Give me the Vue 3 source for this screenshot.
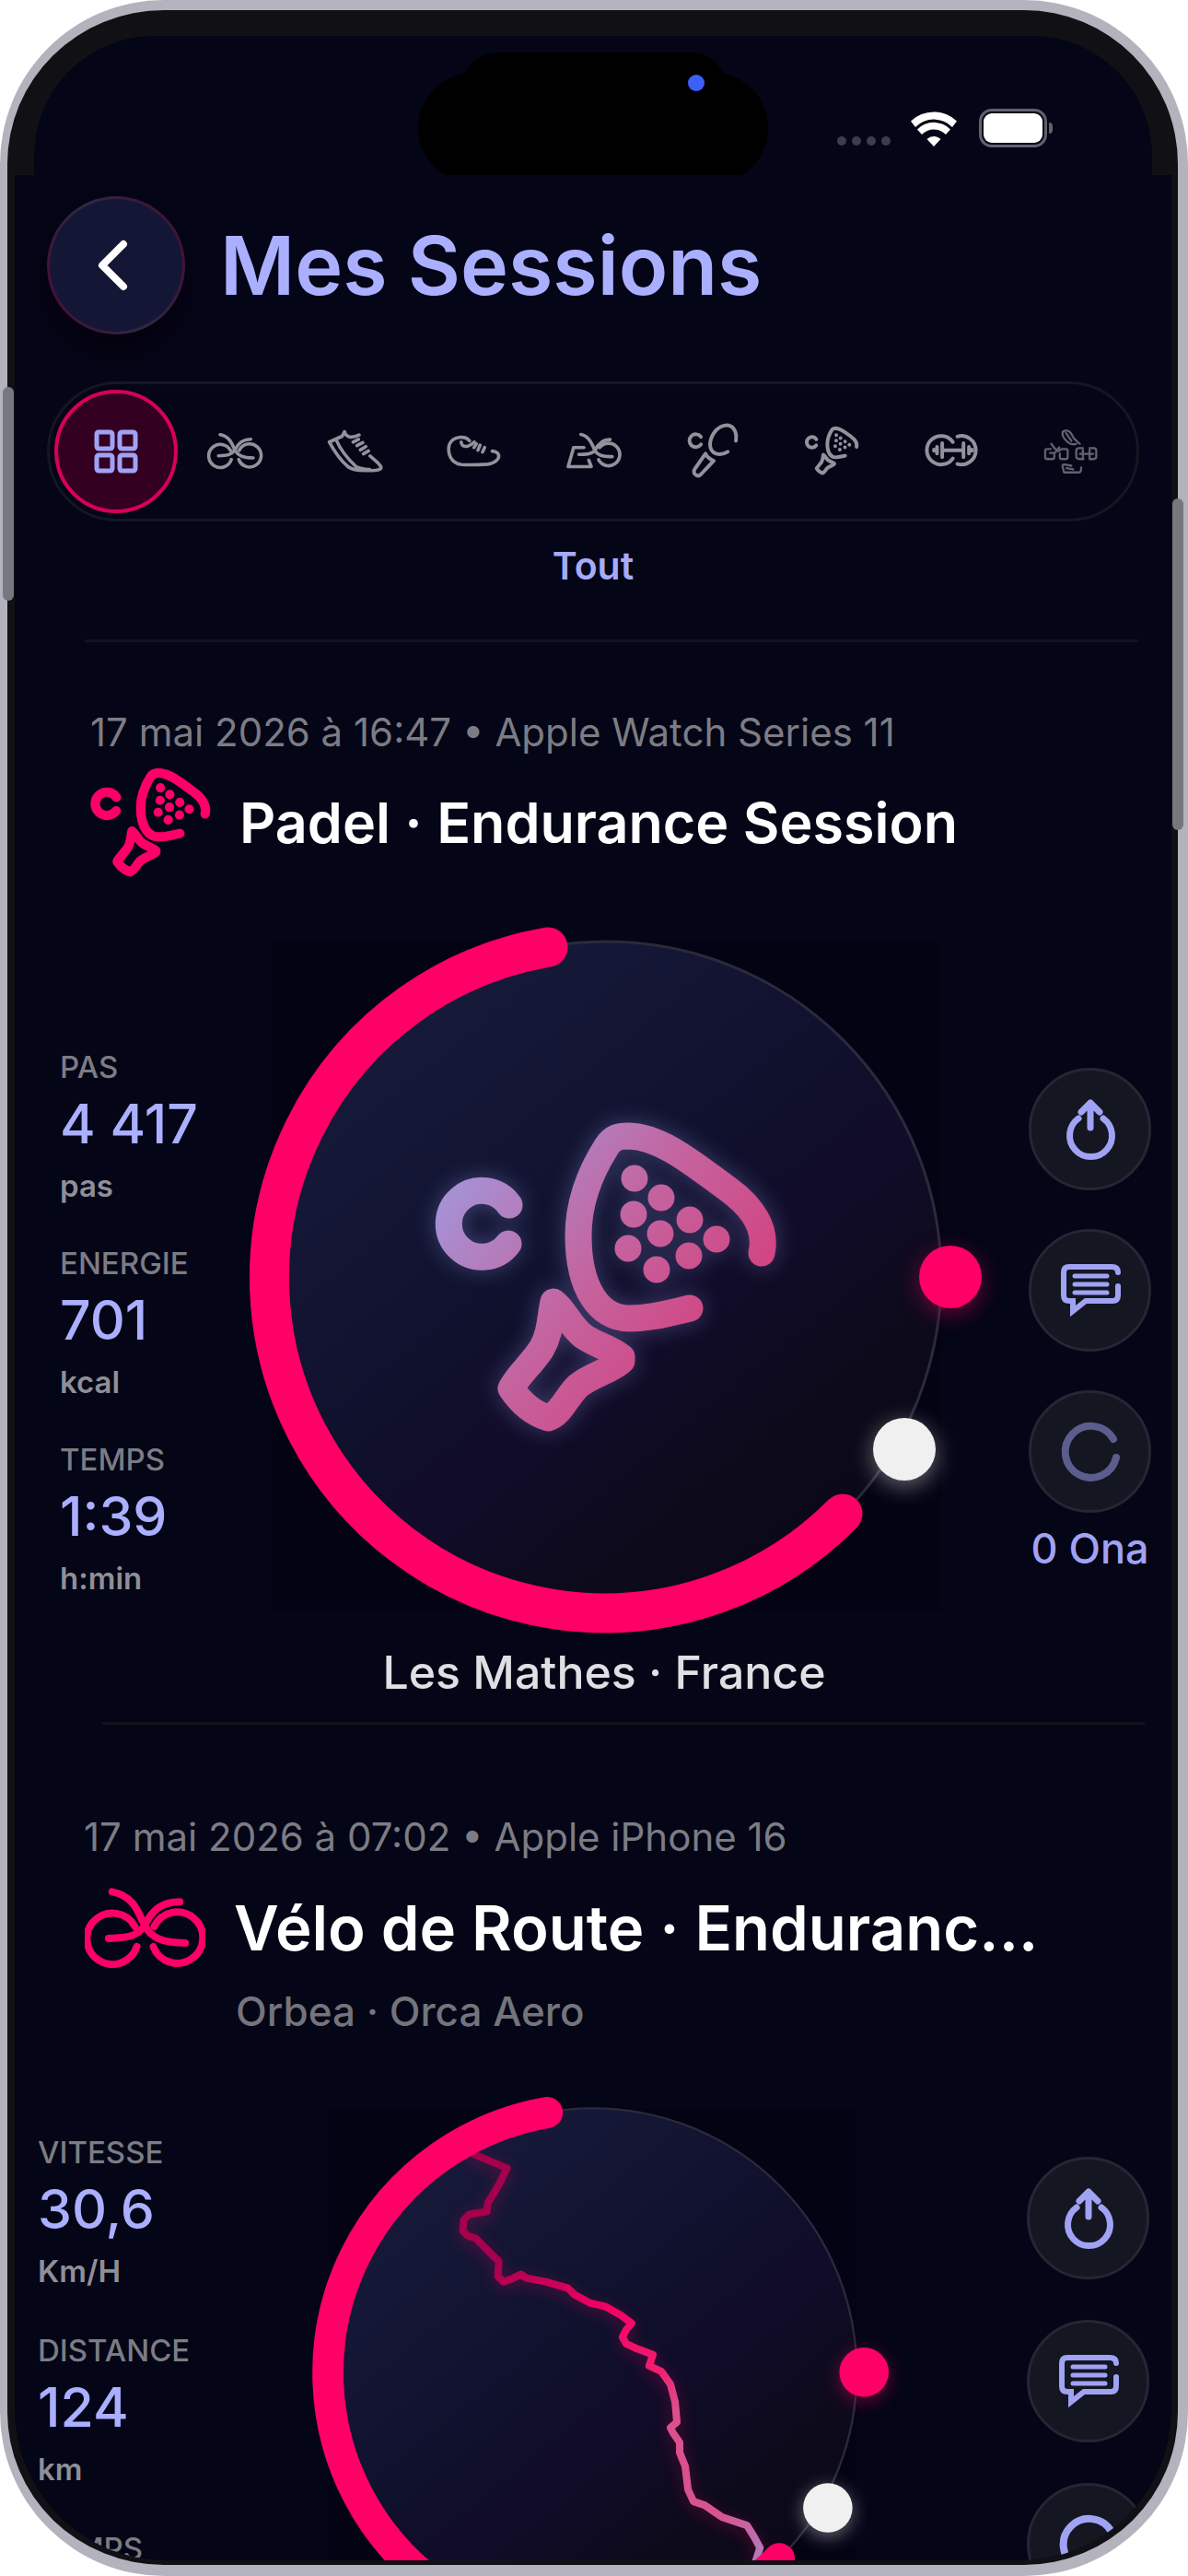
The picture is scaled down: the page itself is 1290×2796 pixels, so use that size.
<script setup>
import { ref } from 'vue'

const padel = [
  'M80 89A36 36 0 1 0 79 131',
  'M276 201C250 207 232 212 210 212C178 212 155 180 155 122C155 84 170 50 186 25C192 16 198 14 210 14C246 15 282 46 318 72C344 91 360 115 354 141',
  'M128 194C124 212 125 228 115 245C104 262 90 273 82 288C92 303 106 315 122 320C136 316 142 297 155 285C168 274 192 268 202 258V254C190 244 172 240 160 231C146 220 140 203 128 194Z',
  'M216 60h0M245 81h0M215 99h0M276 105h0M244 120h0M305 126h0M209 136h0M275 144h0M240 159h0',
]

const bike = [
  'M30 4C52 8 58 24 65 40C72 54 84 60 110 60',
  'M104 15C84 15 74 24 66 40C58 53 48 54 26 55',
  'M57 64A28 28 0 1 1 55 42',
  'M75 64A28 28 0 1 0 76 42',
]

const tabs = [
  {
    label: 'Tout',
    box: '-33 -33 66 66',
    width: 5,
    paths: [
      'M-19-21H-7Q-4-21-4-18V-6Q-4-3-7-3H-18Q-21-3-21-6V-18Q-21-21-19-21Z',
      'M7-21H18Q21-21 21-18V-6Q21-3 18-3H7Q4-3 4-6V-18Q4-21 7-21Z',
      'M-18 4H-7Q-4 4-4 7V18Q-4 21-7 21H-18Q-21 21-21 18V7Q-21 4-18 4Z',
      'M7 4H18Q21 4 21 7V18Q21 21 18 21H7Q4 21 4 18V7Q4 4 7 4Z',
    ],
  },
  { label: 'Vélo', box: '-8 -29 147 147', width: 8, paths: bike },
  {
    label: 'Course',
    box: '425 53 200 200',
    width: 11,
    paths: [
      'M492 88C498 108 515 110 540 99M492 88L484 103L442 122C460 155 480 182 502 202C515 214 535 216 560 216C590 216 618 216 611 202C604 190 590 180 576 168',
      'M464 114C480 150 505 180 530 203C540 208 555 211 575 212',
      'M520 122L538 113M533 134L552 124M544 148L562 137M554 161L571 151',
    ],
  },
  {
    label: 'Marche',
    box: '815 53 200 200',
    width: 11,
    paths: [
      'M902 118C888 100 848 102 836 130C828 160 842 192 876 196C905 198 935 197 962 195C990 191 1003 175 997 162C994 156 987 153 977 152',
      'M875 122C876 140 898 142 918 122',
      'M917 140L925 128M930 149L937 132M945 155L952 140',
    ],
  },
  {
    label: 'Home trainer',
    box: '1202 53 200 200',
    width: 11,
    paths: [
      'M1272 140H1238L1220 203H1296L1288 182',
      'M1262 97C1290 103 1299 130 1308 150C1318 168 1340 171 1365 170',
      'M1358 114C1332 113 1318 130 1308 150C1298 163 1275 163 1255 163',
      'M1320 180A37 37 0 1 0 1324 140',
    ],
  },
  {
    label: 'Tennis',
    box: '59 53 200 200',
    width: 12,
    paths: [
      'M120 105A21 21 0 1 0 120 130',
      'M235 118C240 82 222 66 202 67C172 70 150 102 150 132C152 162 182 170 208 154',
      'M135 160C138 170 150 178 162 184L120 228C108 240 92 226 99 212Z',
    ],
  },
  { label: 'Padel', box: '-23 -35 414 414', width: 25, paths: padel },
  {
    label: 'Musculation',
    box: '833 53 200 200',
    width: 12,
    paths: [
      'M938 122A47 47 0 1 0 938 176M953 104A47 47 0 1 1 953 194',
      'M905 149H970M903 126V172M973 126V172M886 138V160M991 138V160M876 147V151M1001 147V151',
    ],
  },
  {
    label: 'Autres',
    box: '1220 53 200 200',
    width: 7,
    dim: true,
    paths: [
      'M1296 88C1304 82 1316 84 1322 92L1334 112L1352 128M1296 88C1292 98 1300 112 1312 122C1322 130 1334 130 1340 128M1306 92L1324 118',
      'M1256 145H1244Q1238 145 1238 151V172Q1238 178 1244 178H1262Q1268 178 1268 172V164M1286 150Q1288 145 1294 145H1306Q1312 145 1312 151V172Q1312 178 1306 178H1292Q1286 178 1286 172V160M1258 128L1270 144L1282 152M1284 140L1270 158H1254',
      'M1362 142H1350Q1340 142 1340 152V170Q1340 178 1350 178H1364M1384 142H1398Q1406 142 1406 152V170Q1406 178 1398 178H1384M1352 161H1396M1362 148V176M1384 148V176',
      'M1324 200L1300 196Q1294 196 1295 202L1300 222H1348Q1358 222 1356 206M1308 208L1330 212',
    ],
  },
]

const activeTab = ref('Tout')

const sessions = [
  {
    id: 1,
    kind: 'emblem',
    date: '17 mai 2026 à 16:47 • Apple Watch Series 11',
    title: 'Padel · Endurance Session',
    icon: { box: '0 0 371 336', width: 29, paths: padel },
    stats: [
      { label: 'PAS', value: '4 417', unit: 'pas' },
      { label: 'ENERGIE', value: '701', unit: 'kcal' },
      { label: 'TEMPS', value: '1:39', unit: 'h:min' },
    ],
    place: 'Les Mathes · France',
    ona: '0 Ona',
  },
  {
    id: 2,
    kind: 'route',
    date: '17 mai 2026 à 07:02 • Apple iPhone 16',
    title: 'Vélo de Route · Enduranc...',
    gear: 'Orbea · Orca Aero',
    icon: { box: '0 0 132 88', width: 8, paths: bike },
    stats: [
      { label: 'VITESSE', value: '30,6', unit: 'Km/H' },
      { label: 'DISTANCE', value: '124', unit: 'km' },
      { label: 'TEMPS' },
    ],
  },
]

const route =
  'M-136-239L-93-221L-102-203L-114-183L-115-174L-134-171L-140-165L-141-153L-136-148L-127-145L-102-120L-103-104L-97-98L-88-101L-78-106L-72-102L-51-98L-27-91L-20-84L-3-75L14-71L30-62L42-53L36-46L32-38L36-31L49-25L65-19L61-7L74-1L84 13L89 32L91 54L84 60L87 66L94 76L94 87L100 102L103 127L109 140L121 144L140 157L167 166L175 179L181 190L176 206'
</script>

<template>
  <div class="phone">
    <span class="side side-left"></span>
    <span class="side side-right"></span>

    <div class="top">
      <div class="status">
        <div class="island"><i class="camera"></i></div>
        <div class="signal"><i v-for="n in 4" :key="n"></i></div>
        <svg class="wifi" viewBox="0 0 50 40" aria-hidden="true">
          <path d="M25 40L17.500 32A11 11 0 0 1 32.500 32Z" />
          <path d="M12 27A18 18 0 0 1 38 27L43 21.500A25 25 0 0 0 7 21.500Z" />
          <path d="M5 19A28 28 0 0 1 45 19L50 12.500A36 36 0 0 0 0 12.500Z" />
        </svg>
        <div class="battery"><i></i></div>
      </div>
    </div>

    <main class="screen">
      <header class="header">
        <button class="back" type="button" aria-label="Retour">
          <svg viewBox="0 0 40 60"><path d="M31 7L8 30L31 53" /></svg>
        </button>
        <h1>Mes Sessions</h1>
      </header>

      <nav class="tabs" aria-label="Sports">
        <div v-for="tab in tabs" :key="tab.label" class="tab-cell">
          <button
            type="button"
            class="tab"
            :class="{ active: tab.label === activeTab, dim: tab.dim }"
            :aria-label="tab.label"
            @click="activeTab = tab.label"
          >
            <svg :viewBox="tab.box" :stroke-width="tab.width" class="line-icon">
              <path v-for="d in tab.paths" :key="d" :d="d" />
            </svg>
          </button>
        </div>
      </nav>
      <p class="tab-name">{{ activeTab }}</p>
      <hr class="rule" />

      <article v-for="s in sessions" :key="s.id" class="session" :class="s.kind">
        <p class="date">{{ s.date }}</p>
        <div class="title-row">
          <svg class="line-icon sport" :viewBox="s.icon.box" :stroke-width="s.icon.width">
            <path v-for="d in s.icon.paths" :key="d" :d="d" />
          </svg>
          <h2>{{ s.title }}</h2>
        </div>
        <p v-if="s.gear" class="gear">{{ s.gear }}</p>

        <div class="body">
          <dl class="stats">
            <div v-for="st in s.stats" :key="st.label" class="stat">
              <dt>{{ st.label }}</dt>
              <dd v-if="st.value" class="value">{{ st.value }}</dd>
              <dd v-if="st.unit" class="unit">{{ st.unit }}</dd>
            </div>
          </dl>

          <svg class="ring" viewBox="-386 -386 794 772" aria-hidden="true">
            <defs>
              <linearGradient :id="'disc' + s.id" x1="0.15" y1="0.1" x2="0.8" y2="0.9">
                <stop offset="0" stop-color="#181a3b" />
                <stop offset="0.45" stop-color="#0f112d" />
                <stop offset="0.62" stop-color="#110c29" />
                <stop offset="0.85" stop-color="#0d0a1b" />
                <stop offset="1" stop-color="#0b0917" />
              </linearGradient>
              <linearGradient :id="'emblem' + s.id" gradientUnits="userSpaceOnUse" x1="20" y1="50" x2="290" y2="250">
                <stop offset="0" stop-color="#a494d8" />
                <stop offset="0.55" stop-color="#c4649f" />
                <stop offset="1" stop-color="#d14582" />
              </linearGradient>
              <linearGradient :id="'route' + s.id" gradientUnits="userSpaceOnUse" x1="-140" y1="-240" x2="180" y2="205">
                <stop offset="0" stop-color="#a3004c" />
                <stop offset="0.22" stop-color="#a8004e" />
                <stop offset="0.42" stop-color="#f50065" />
                <stop offset="0.58" stop-color="#f0206f" />
                <stop offset="0.66" stop-color="#dc4f8c" />
                <stop offset="0.88" stop-color="#d5558f" />
                <stop offset="1" stop-color="#b07cc0" />
              </linearGradient>
            </defs>
            <rect x="-364" y="-364" width="728" height="728" fill="#040314" />
            <circle r="364" :fill="`url(#disc${s.id})`" stroke="#292a3c" stroke-width="3" />

            <g
              v-if="s.kind === 'emblem'"
              class="emblem-shape"
              transform="translate(-185 -167)"
              :stroke="`url(#emblem${s.id})`"
              stroke-width="29"
            >
              <path v-for="d in padel" :key="d" :d="d" />
            </g>
            <g v-else class="route-shape" transform="scale(1.273)" :stroke="`url(#route${s.id})`" stroke-width="8">
              <path :d="route" />
            </g>

            <path d="M257 257A364 364 0 1 1 -63 -358" fill="none" stroke="#ff0066" stroke-width="43" stroke-linecap="round" />
            <circle class="glow-pink" cx="374" cy="0" r="34" />
            <circle class="glow-white" cx="324" cy="187" r="34" />
          </svg>

          <div class="actions">
            <button type="button" class="action" aria-label="Partager">
              <svg class="line-icon" viewBox="-36 -36 72 72" stroke-width="7">
                <path d="M-13-12A23 23 0 1 0 14-12M0-29V-2M-10-19L0-29L10-19" />
              </svg>
            </button>
            <button type="button" class="action" aria-label="Commentaires">
              <svg class="line-icon chat" viewBox="-36 -36 72 72" stroke-width="6">
                <path d="M30-5V5Q30 11 24 11H-5L-19 22V11H-23Q-29 11-29 5V-20Q-29-26-23-26H23Q30-26 30-20" />
                <path d="M-17-16H18M-17-7H18M-17 2H18" stroke-width="5" />
              </svg>
            </button>
            <button type="button" class="action ona" aria-label="Ona">
              <svg class="line-icon" viewBox="-36 -36 72 72" stroke-width="8">
                <path d="M25-14A28 28 0 1 0 28 6" />
              </svg>
            </button>
            <span v-if="s.ona" class="ona-count">{{ s.ona }}</span>
          </div>
        </div>

        <template v-if="s.place">
          <p class="place">{{ s.place }}</p>
          <hr class="rule" />
        </template>
      </article>
    </main>
  </div>
</template>

<style>
body {
  background: #fff;
}
</style>

<style scoped>
* {
  box-sizing: border-box;
}
.phone {
  position: relative;
  display: flex;
  flex-direction: column;
  height: 100vh;
  padding: 0 7px 5px 8px;
  border: solid #b3b3bd;
  border-width: 11px 11px 12px 8px;
  border-radius: 178px;
  background: #111115;
  overflow: clip;
  overflow-clip-margin: border-box;
  font-family: Inter, "Liberation Sans", sans-serif;
  color: #fff;
}
h1,
h2,
p,
dl,
dd {
  margin: 0;
}
button {
  padding: 0;
  border: 0;
  background: none;
  color: inherit;
  font: inherit;
}
.side {
  position: absolute;
  z-index: 2;
  width: 12px;
  border-radius: 6px;
  background: #77777f;
}
.side-left {
  left: -5px;
  top: 409px;
  height: 232px;
}
.side-right {
  right: -6px;
  top: 530px;
  height: 360px;
}
.top {
  flex: none;
  height: 179px;
  padding: 28px 21px 0;
}
.status {
  position: relative;
  display: flex;
  align-items: flex-start;
  justify-content: flex-end;
  height: 151px;
  padding-right: 114px;
  border-radius: 130px 130px 0 0;
  background: #040516;
  overflow: hidden;
}
.island {
  position: absolute;
  top: 40px;
  left: 50%;
  width: 380px;
  height: 120px;
  margin-left: -190px;
  border-radius: 60px;
  background: #000;
}
.island::before {
  content: "";
  position: absolute;
  top: -22px;
  left: 46px;
  right: 44px;
  height: 80px;
  border-radius: 40px;
  background: #000;
}
.camera {
  position: absolute;
  top: 2px;
  right: 69px;
  width: 18px;
  height: 18px;
  border-radius: 50%;
  background: #3b5ff8;
}
.signal {
  display: flex;
  flex: none;
  gap: 6px;
  margin: 109px 22px 0 0;
}
.signal i {
  width: 10px;
  height: 10px;
  border-radius: 50%;
  background: #3c3c4a;
}
.wifi {
  flex: none;
  width: 50px;
  height: 40px;
  margin: 80px 24px 0 0;
  fill: #fff;
}
.battery {
  position: relative;
  flex: none;
  width: 74px;
  height: 42px;
  margin-top: 79px;
  padding: 2px;
  border: 3px solid #62626e;
  border-radius: 14px;
}
.battery i {
  display: block;
  height: 100%;
  border-radius: 9px;
  background: #fff;
}
.battery::after {
  content: "";
  position: absolute;
  top: 12px;
  right: -9px;
  width: 4px;
  height: 12px;
  border-radius: 0 4px 4px 0;
  background: #62626e;
}
.screen {
  flex: 1;
  min-height: 0;
  overflow: hidden;
  background: #040516;
  border-radius: 0 0 164px 164px;
}
.header {
  display: flex;
  align-items: center;
  gap: 38px;
  padding: 23px 35px 0;
}
.back {
  display: grid;
  flex: none;
  place-items: center;
  width: 150px;
  height: 150px;
  border: 3px solid transparent;
  border-radius: 50%;
  background:
    linear-gradient(#141635, #141635) padding-box,
    linear-gradient(65deg, #4a0a36, #2d2942 50%, #4a0a36) border-box;
  box-shadow: 0 18px 24px #06020f;
}
.back svg {
  width: 40px;
  height: 60px;
  margin-right: 6px;
  fill: none;
  stroke: #fff;
  stroke-width: 8;
  stroke-linecap: round;
  stroke-linejoin: round;
}
h1 {
  font-size: 88px;
  line-height: 110px;
  font-weight: 600;
  color: #abafff;
}
.line-icon {
  fill: none;
  stroke: currentColor;
  stroke-linecap: round;
  stroke-linejoin: round;
}
.tabs {
  display: flex;
  align-items: center;
  height: 152px;
  margin: 51px 35px 0;
  padding: 0 7px;
  border: 3px solid #151621;
  border-radius: 76px;
}
.tab-cell {
  display: flex;
  flex: 1 1 0;
  justify-content: center;
  min-width: 0;
}
.tab {
  display: grid;
  flex: none;
  place-items: center;
  width: 134px;
  height: 134px;
  border-radius: 50%;
  color: #92929b;
}
.tab.dim {
  color: #62626e;
}
.tab svg {
  width: 66px;
  height: 66px;
}
.tab.active {
  border: 4px solid #d80058;
  background: #330021;
  color: #a0a3f3;
}
.tab-name {
  margin-top: 18px;
  text-align: center;
  font-size: 41px;
  line-height: 60px;
  font-weight: 600;
  color: #a6aafa;
}
.rule {
  height: 3px;
  margin: 50px 36px 0 76px;
  border: 0;
  background: #12131e;
}
.session {
  padding-top: 72px;
}
.date {
  padding-left: 82px;
  font-size: 42px;
  line-height: 52px;
  white-space: nowrap;
  color: #7c7c84;
}
.title-row {
  display: flex;
  align-items: center;
  gap: 31px;
  height: 118px;
  margin-top: 13px;
  padding-left: 82px;
}
.sport {
  flex: none;
  width: 131px;
  height: 118px;
  color: #ff0066;
}
h2 {
  white-space: nowrap;
  font-size: 61px;
  line-height: 80px;
  font-weight: 600;
}
.body {
  display: grid;
  grid-template-columns: 207px minmax(0, 1fr) 206px;
  align-items: start;
  margin-top: 48px;
  padding-left: 49px;
}
.ring {
  display: block;
  width: 100%;
  overflow: visible;
}
.emblem-shape,
.route-shape {
  fill: none;
  stroke-linecap: round;
  stroke-linejoin: round;
}
.emblem-shape {
  filter: drop-shadow(0 0 12px rgba(150, 150, 230, 0.35));
}
.route-shape {
  filter: drop-shadow(0 4px 8px rgba(255, 0, 102, 0.3));
}
.glow-pink {
  fill: #ff0066;
  filter: drop-shadow(0 6px 12px rgba(255, 0, 102, 0.4));
}
.glow-white {
  fill: #f0f0f0;
  filter: drop-shadow(0 6px 12px rgba(255, 255, 255, 0.4));
}
.stats {
  display: flex;
  flex-direction: column;
  gap: 29px;
  padding-top: 133px;
  white-space: nowrap;
}
dt {
  font-size: 33px;
  line-height: 50px;
  font-weight: 500;
  color: #7c7c84;
}
.value {
  font-size: 59px;
  line-height: 74px;
  font-weight: 500;
  color: #abafff;
}
.unit {
  font-size: 33px;
  line-height: 60px;
  font-weight: 600;
  color: #8f8f98;
}
.actions {
  display: flex;
  flex-direction: column;
  align-items: center;
  justify-self: end;
  gap: 42px;
  padding: 159px 22px 0 0;
}
.action {
  display: grid;
  place-items: center;
  width: 133px;
  height: 133px;
  border: 3px solid #252634;
  border-radius: 50%;
  background: #141622;
  color: #a0a3f3;
}
.action svg {
  width: 72px;
  height: 72px;
}
.chat {
  stroke-linejoin: miter;
}
.emblem .ona {
  color: #5b5d8c;
}
.ona-count {
  margin-top: -30px;
  font-size: 45px;
  line-height: 54px;
  font-weight: 500;
  color: #a0a3f3;
}
.place {
  margin-top: 13px;
  padding-left: 24px;
  text-align: center;
  font-size: 50px;
  line-height: 60px;
  font-weight: 500;
  color: #e0e0e4;
}
.session .rule {
  margin: 24px 29px 0 95px;
}
.route {
  padding-top: 96px;
}
.route .date {
  padding-left: 75px;
}
.route .title-row {
  height: 88px;
  margin-top: 29px;
  padding-left: 76px;
}
.route .sport {
  height: 88px;
}
.route h2 {
  font-size: 67px;
}
.gear {
  margin-top: 20px;
  padding-left: 240px;
  font-size: 44px;
  line-height: 52px;
  font-weight: 500;
  color: #74747c;
}
.route .body {
  grid-template-columns: 299px minmax(0, 1fr) 307px;
  margin-top: 62px;
  padding-left: 25px;
}
.route .stats {
  gap: 31px;
  padding-top: 40px;
}
.route .actions {
  gap: 44px;
  padding: 70px 24px 0 0;
}
</style>
